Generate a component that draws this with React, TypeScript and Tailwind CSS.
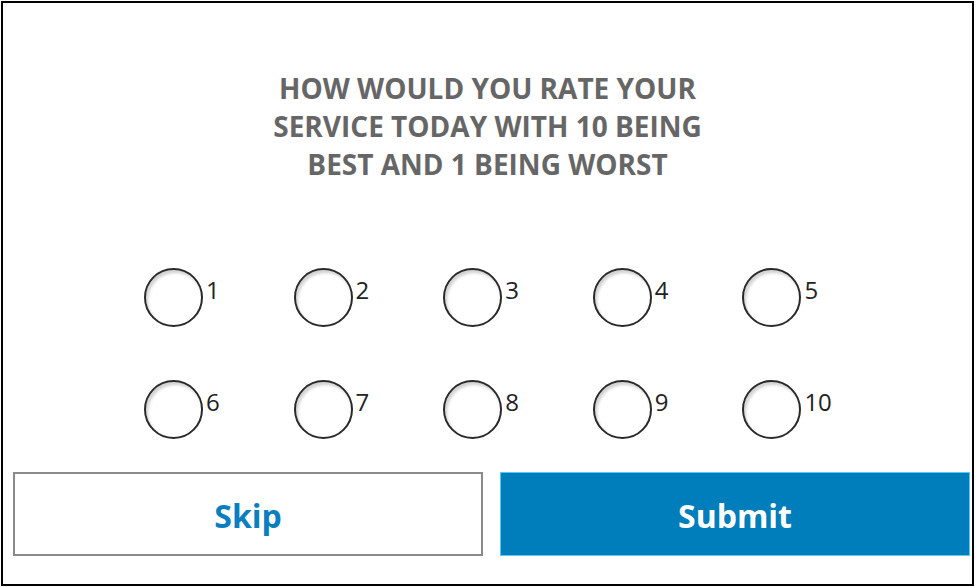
import React from "react";

function Radio({ n }: { n: number }) {
  return (
    <div className="w-[149.6px] flex items-start">
      <div className="w-[59px] h-[59px] rounded-full border-2 border-[#2a2a2a] bg-white shadow-[inset_2px_3px_3px_rgba(0,0,0,0.18)] shrink-0" />
      <span className="text-[24px] leading-[28px] text-[#222] mt-[8px] ml-[3px]">{n}</span>
    </div>
  );
}

export default function App() {
  const row1 = [1, 2, 3, 4, 5];
  const row2 = [6, 7, 8, 9, 10];
  return (
    <div
      className="w-[976px] h-[587px] bg-white pl-[1px] pt-[1px] pr-[2px] pb-[1px]"
      style={{ fontFamily: '"Open Sans", "Liberation Sans", sans-serif' }}
    >
      <div className="w-full h-full border-2 border-black flex flex-col">
        <div className="pt-[66px] text-center text-[28px] leading-[38px] font-bold text-[#666]">
          <div>HOW WOULD YOU RATE YOUR</div>
          <div>SERVICE TODAY WITH 10 BEING</div>
          <div>BEST AND 1 BEING WORST</div>
        </div>
        <div className="pl-[141px] pt-[85px] flex flex-col gap-[53px]">
          <div className="flex">
            {row1.map((n) => (
              <Radio key={n} n={n} />
            ))}
          </div>
          <div className="flex">
            {row2.map((n) => (
              <Radio key={n} n={n} />
            ))}
          </div>
        </div>
        <div className="mt-[33px] pl-[10px] flex gap-[17px]">
          <button className="w-[470px] h-[84px] pt-[3px] border-2 border-[#8a8a8a] bg-white text-[#0a7fc0] text-[32px] font-bold">
            Skip
          </button>
          <button className="w-[470px] h-[84px] pt-[3px] border border-[#5cc8f5] bg-[#007dbb] text-white text-[32px] font-bold">
            Submit
          </button>
        </div>
      </div>
    </div>
  );
}
